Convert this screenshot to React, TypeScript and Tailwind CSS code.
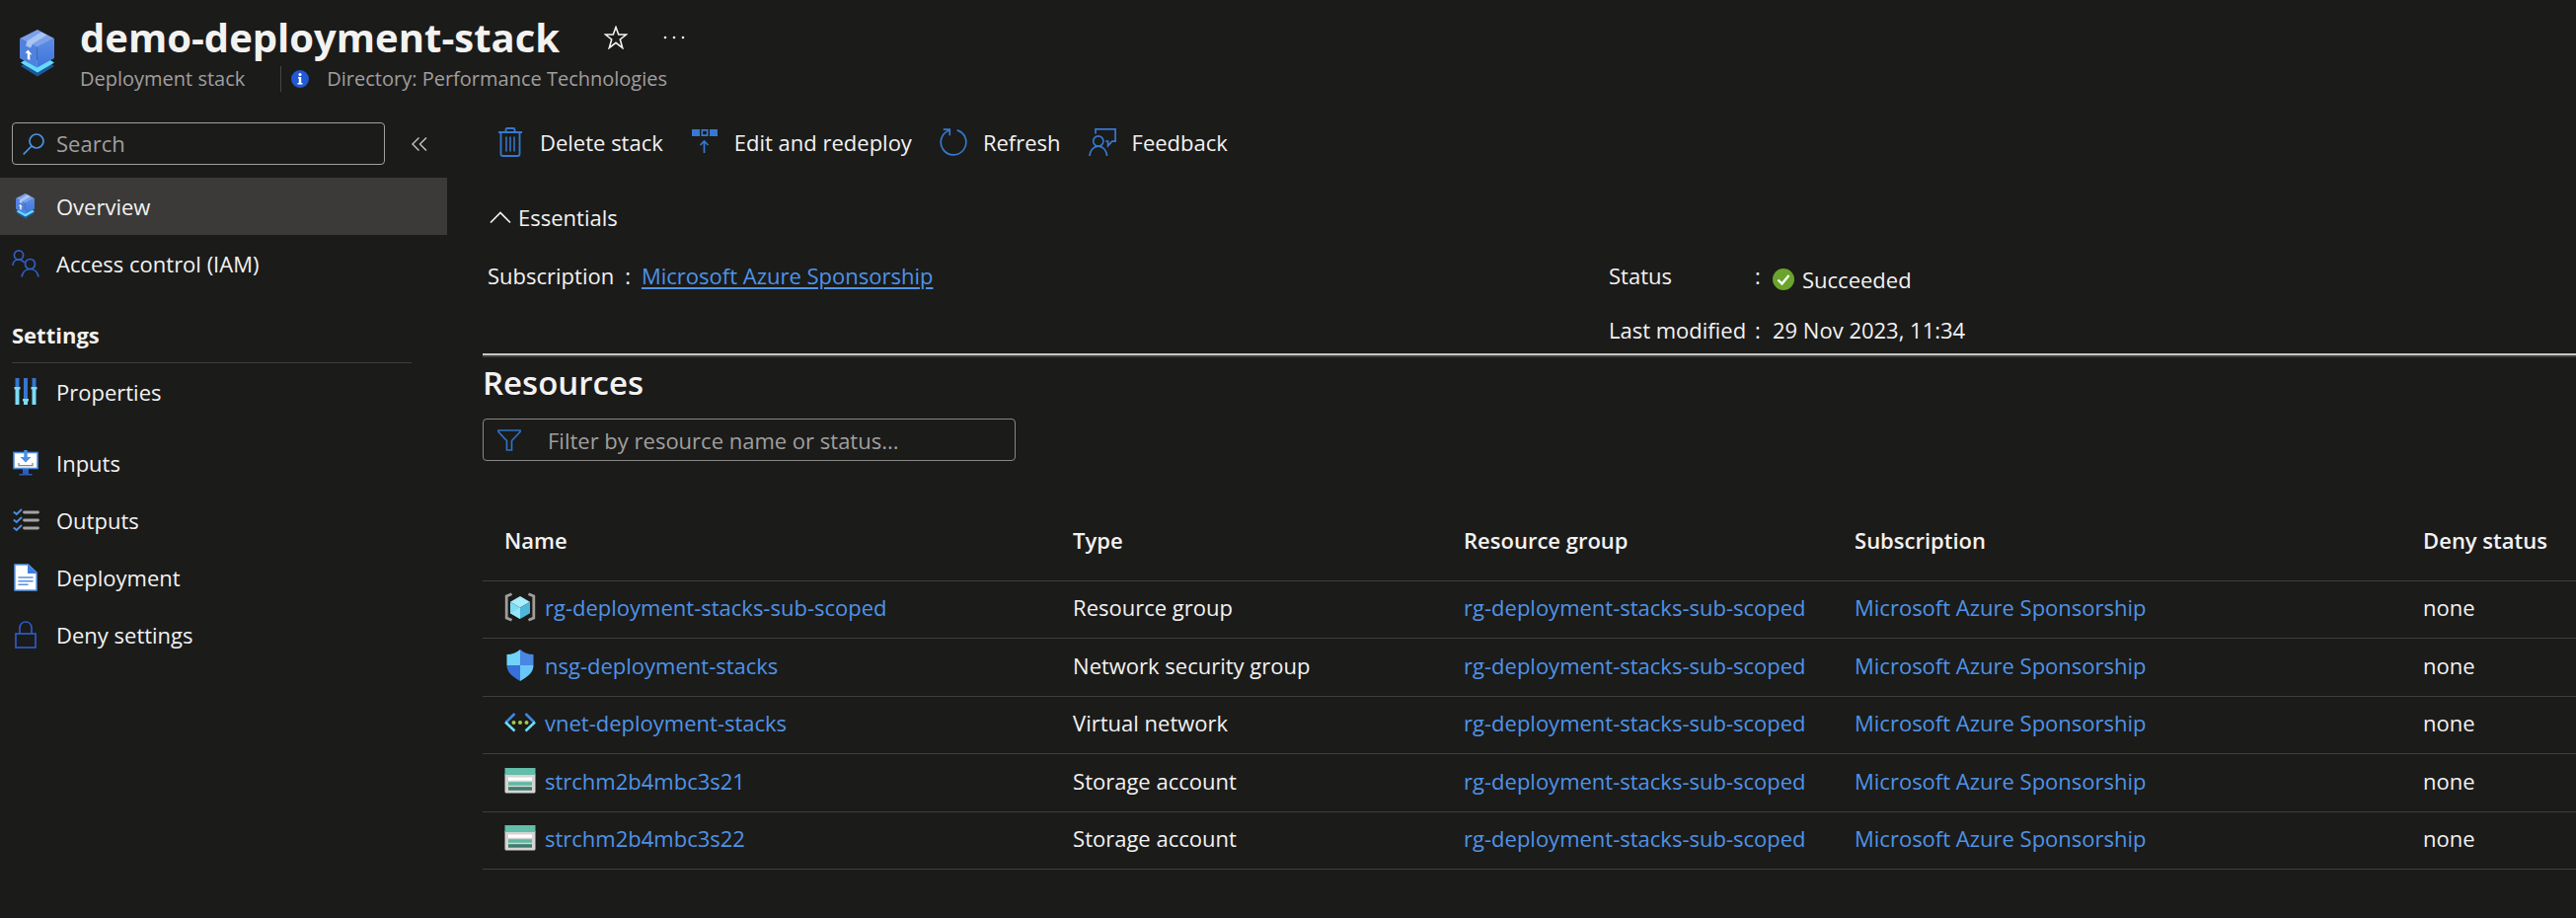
import type { ReactNode } from "react";

type IconProps = { className?: string };

function StackIcon({ className }: IconProps) {
  return (
    <svg viewBox="0 0 36 48" className={className} aria-hidden="true">
      <defs>
        <linearGradient id="stackFront" x1="0" y1="0" x2="0" y2="1">
          <stop offset="0" stopColor="#5c8ee8" />
          <stop offset="1" stopColor="#3e74d8" />
        </linearGradient>
      </defs>
      <path d="M1 37 18 47.500 35 37 31 34.500H5z" fill="#1d5798" />
      <path d="M1 33.500 18 43.500 35 33.500 31 31H5z" fill="#63dcfb" />
      <path d="M0 9 17.500 17V38.500L0 29z" fill="#4f82de" />
      <path d="M35 9 17.500 17V38.500L35 29z" fill="url(#stackFront)" />
      <path d="M18 0 35 9 17.500 17.500 0 9z" fill="#7ba1ea" />
      <path d="M21.500 2.500 27.500 5.500 13 14.500 11 18.500 6 16.500 7.500 11.500z" fill="#a9c4f5" />
      <path d="M8.500 20.500 12.500 25.500 10.300 25V31L7.800 29.700V24L5.500 23.500z" fill="#fff" />
    </svg>
  );
}

function InfoIcon({ className }: IconProps) {
  return (
    <svg viewBox="0 0 18 18" className={className} aria-hidden="true">
      <circle cx="9" cy="9" r="9" fill="#2359d3" />
      <circle cx="9" cy="4.600" r="1.500" fill="#fff" />
      <path d="M7 7h3.200v6H11.500v1.500h-5V13h1.300V8.500H7z" fill="#fff" />
    </svg>
  );
}

function StarIcon({ className }: IconProps) {
  return (
    <svg viewBox="0 0 24 24" className={className} fill="none" stroke="#f3f2f1" strokeWidth="1.600" aria-hidden="true">
      <path d="M12 1.500 14.700 9H22.500L16.300 14 18.700 22.500 12 17.300 5.300 22.500 7.700 14 1.500 9H9.300z" />
    </svg>
  );
}

function MoreIcon({ className }: IconProps) {
  return (
    <svg viewBox="0 0 22 4" className={className} fill="#f3f2f1" aria-hidden="true">
      <circle cx="2" cy="2" r="1.300" />
      <circle cx="11" cy="2" r="1.300" />
      <circle cx="20" cy="2" r="1.300" />
    </svg>
  );
}

function SearchIcon({ className }: IconProps) {
  return (
    <svg viewBox="0 0 22 22" className={className} fill="none" stroke="#4a93dd" strokeWidth="1.700" aria-hidden="true">
      <circle cx="14" cy="8" r="7" />
      <path d="M9 13 .700 21.300" />
    </svg>
  );
}

function CollapseIcon({ className }: IconProps) {
  return (
    <svg viewBox="0 0 16 14" className={className} fill="none" stroke="#c8c6c4" strokeWidth="1.400" aria-hidden="true">
      <path d="M7.500.500 1 7l6.500 6.500M15 .500 8.500 7 15 13.500" />
    </svg>
  );
}

function PeopleIcon({ className }: IconProps) {
  return (
    <svg viewBox="0 0 28 28" className={className} fill="none" stroke="#2f5fc4" strokeWidth="1.700" aria-hidden="true">
      <circle cx="7" cy="5.500" r="4.600" />
      <circle cx="18.500" cy="14.500" r="5" />
      <path d="M1 16c0-3.500 2.500-6 6-6 2.500 0 4.500 1.200 5.600 3.200M10 27.500c.8-4.500 4-8 8.500-8s7.700 3.500 8.500 8" />
    </svg>
  );
}

function SlidersIcon({ className }: IconProps) {
  return (
    <svg viewBox="0 0 24 28" className={className} aria-hidden="true">
      <path d="M1.500 0h4v10h-4zM10 0h4v22h-4zM18.500 0h4v10h-4z" fill="#3576cf" />
      <path d="M.500 9h6v2.500h-1V27h-4V11.500h-1zM17.500 9h6v2.500h-1V27h-4V11.500h-1zM9 21h6v2.500h-1V27h-4v-3.500H9z" fill="#7ddcf5" />
    </svg>
  );
}

function InputsIcon({ className }: IconProps) {
  return (
    <svg viewBox="0 0 26 26" className={className} aria-hidden="true">
      <path d="M10 19h6v5h3.500v1.500h-13V24H10z" fill="#2c5fb5" />
      <rect x="1" y="2.500" width="24" height="16" fill="#fff" stroke="#4b8fe0" strokeWidth="1.600" />
      <path d="M6 13v2.700h14V13" fill="none" stroke="#8a8886" strokeWidth="1.300" />
      <path d="M11.300 0h3.400v7h3.800L13 12.500 7.500 7h3.800z" fill="#4b8fe0" />
    </svg>
  );
}

function OutputsIcon({ className }: IconProps) {
  return (
    <svg viewBox="0 0 27 24" className={className} fill="none" aria-hidden="true">
      <path d="M.800 3.500 3.800 6 9 1M.800 11.500l3 2.500L9 9M.800 19.500l3 2.500L9 17" stroke="#4b8fe0" strokeWidth="2" />
      <path d="M11.500 4H25.500M11.500 12H25.500M11.500 20H25.500" stroke="#a5a3a1" strokeWidth="2.800" strokeLinecap="round" />
    </svg>
  );
}

function DocumentIcon({ className }: IconProps) {
  return (
    <svg viewBox="0 0 24 28" className={className} aria-hidden="true">
      <path d="M1 1h13.500L23 9v18H1z" fill="#fff" stroke="#5b97e8" strokeWidth="1.500" />
      <path d="M14 .500 23.500 10H14z" fill="#3f7fdc" />
      <path d="M5 14h14M5 17.700h14M5 21.300h9" stroke="#5b8fe0" strokeWidth="1.600" strokeLinecap="round" />
    </svg>
  );
}

function LockIcon({ className }: IconProps) {
  return (
    <svg viewBox="0 0 22 28" className={className} fill="none" stroke="#3059c4" strokeWidth="1.700" aria-hidden="true">
      <rect x="1" y="13" width="20" height="14" />
      <path d="M5 13V7.500C5 3.500 7.500 1 11 1s6 2.500 6 6.500V13" />
    </svg>
  );
}

function TrashIcon({ className }: IconProps) {
  return (
    <svg viewBox="0 0 24 30" className={className} fill="none" stroke="#3679cf" strokeWidth="1.800" aria-hidden="true">
      <path d="M0 5h24M7.500 5V2.500Q7.500 1 9 1h6q1.500 0 1.500 1.500V5M2.500 5v22q0 2 2 2h15q2 0 2-2V5" />
      <path d="M8 9.500v15M12 9.500v15M16 9.500v15" strokeWidth="1.500" />
    </svg>
  );
}

function RedeployIcon({ className }: IconProps) {
  return (
    <svg viewBox="0 0 26 30" className={className} fill="none" stroke="#3679cf" strokeWidth="1.700" aria-hidden="true">
      <path d="M0 2h8v7H0zM18 2h8v7h-8z" fill="#3679cf" stroke="none" />
      <path d="M10.300 2.900h5.400v5.200h-5.400zM12.500 26V14M8.500 18l4-4 4 4" />
    </svg>
  );
}

function RefreshIcon({ className }: IconProps) {
  return (
    <svg viewBox="0 0 30 30" className={className} fill="none" stroke="#3679cf" strokeWidth="1.800" aria-hidden="true">
      <path d="M19 2A13.700 13.700 0 1 1 10.500 2.200M4 1.200h7v6.500" />
    </svg>
  );
}

function FeedbackIcon({ className }: IconProps) {
  return (
    <svg viewBox="0 0 30 30" className={className} fill="none" stroke="#3679cf" strokeWidth="1.800" aria-hidden="true">
      <path d="M7.500 6V1H29v13h-3.500l-4.500 5v-5h-2.500" />
      <circle cx="10.500" cy="14" r="5.500" />
      <path d="M1 30c.5-6 4.300-10.500 9.500-10.500S19.500 24 20 30" />
    </svg>
  );
}

function ChevronUpIcon({ className }: IconProps) {
  return (
    <svg viewBox="0 0 22 12" className={className} fill="none" stroke="#f3f2f1" strokeWidth="1.600" aria-hidden="true">
      <path d="M1 11.500 11 1.500l10 10" />
    </svg>
  );
}

function SuccessIcon({ className }: IconProps) {
  return (
    <svg viewBox="0 0 22 22" className={className} fill="none" aria-hidden="true">
      <circle cx="11" cy="11" r="11" fill="#6aa42c" />
      <path d="m5.500 11.500 4 4 7-8.500" stroke="#fff" strokeWidth="2.400" />
    </svg>
  );
}

function FunnelIcon({ className }: IconProps) {
  return (
    <svg viewBox="0 0 24 22" className={className} fill="none" stroke="#2f72c4" strokeWidth="1.700" aria-hidden="true">
      <path d="M1 1h22v1.500L14.500 11.500V21h-5v-9.500L1 2.500z" />
    </svg>
  );
}

function ResourceGroupIcon({ className }: IconProps) {
  return (
    <svg viewBox="0 0 32 30" className={className} aria-hidden="true">
      <path d="M7.500 1.700 2.200 4v22l5.300 2.300M24.500 1.700 29.800 4v22l-5.300 2.300" fill="none" stroke="#a09e9c" strokeWidth="2.800" />
      <path d="m16 4 10 5.700-10 5.800L6 9.700z" fill="#a9ecfb" />
      <path d="M6 9.700 16 15.500V27L6 21.300z" fill="#7bdcf3" />
      <path d="M26 9.700 16 15.500V27l10-5.700z" fill="#4fb8d8" />
      <path d="m6 21.300 10-5.800V27z" fill="#97e6f8" />
    </svg>
  );
}

function ShieldIcon({ className }: IconProps) {
  return (
    <svg viewBox="0 0 32 32" className={className} aria-hidden="true">
      <path d="M16 0v16H2.500V5C8 5 12 3.500 16 0z" fill="#6fd3f8" />
      <path d="M16 0v16h13.500V5C24 5 20 3.500 16 0z" fill="#4a86e4" />
      <path d="M2.500 16H16v16C8 27.500 2.500 23 2.500 16z" fill="#3670d8" />
      <path d="M29.500 16H16v16c8-4.500 13.500-9 13.500-16z" fill="#69c6f8" />
    </svg>
  );
}

function NetworkIcon({ className }: IconProps) {
  return (
    <svg viewBox="0 0 32 20" className={className} fill="none" aria-hidden="true">
      <path d="M10.500 1 1.500 10M21.500 1l9 9" stroke="#3f86dc" strokeWidth="2.600" />
      <path d="m1 9.500 9.500 9M31 9.500l-9.500 9" stroke="#6cdcf2" strokeWidth="2.600" />
      <g fill="#a4c948">
        <circle cx="9.500" cy="10" r="2" />
        <circle cx="16" cy="10" r="2" />
        <circle cx="22.500" cy="10" r="2" />
      </g>
    </svg>
  );
}

function StorageIcon({ className }: IconProps) {
  return (
    <svg viewBox="0 0 32 26" className={className} aria-hidden="true">
      <path d="M.500 6h31v18q0 1.500-1.500 1.500H2Q.500 25.500.500 24z" fill="#d6d4d2" />
      <path d="M.500 0h31v7H.500z" fill="#62bda9" />
      <path d="M4 9.500h24v3.200H4z" fill="#fff" />
      <path d="M4 14.200h24v3.500H4z" fill="#5cb8a4" />
      <path d="M4 19.200h24v3.500H4z" fill="#3d7c6d" />
    </svg>
  );
}

function NavItem({ icon, label, active = false }: { icon: ReactNode; label: string; active?: boolean }) {
  return (
    <li>
      <a
        href="#"
        aria-current={active ? "page" : undefined}
        className={active ? "flex h-[58px] items-center gap-[17px] bg-[#3b3a38] pl-3" : "flex h-[58px] items-center gap-[17px] pl-3"}
      >
        <span className="flex w-7 justify-center">{icon}</span>
        {label}
      </a>
    </li>
  );
}

function Command({ icon, label }: { icon: ReactNode; label: string }) {
  return (
    <button type="button" className="flex items-center gap-4">
      <span className="flex w-7 justify-center">{icon}</span>
      {label}
    </button>
  );
}

const resources = [
  { icon: <ResourceGroupIcon className="w-8" />, name: "rg-deployment-stacks-sub-scoped", type: "Resource group" },
  { icon: <ShieldIcon className="w-8" />, name: "nsg-deployment-stacks", type: "Network security group" },
  { icon: <NetworkIcon className="w-8" />, name: "vnet-deployment-stacks", type: "Virtual network" },
  { icon: <StorageIcon className="w-8" />, name: "strchm2b4mbc3s21", type: "Storage account" },
  { icon: <StorageIcon className="w-8" />, name: "strchm2b4mbc3s22", type: "Storage account" },
];

export default function App() {
  return (
    <div className="min-h-screen bg-[#1b1b1a] font-['Open_Sans','Noto_Sans',sans-serif] text-[22px] leading-8 text-[#f3f2f1]">
      <header className="flex h-[124px] items-start pt-3">
        <StackIcon className="ml-5 mt-[18px] h-12 w-9 shrink-0" />
        <div className="ml-[25px]">
          <div className="flex h-[52px] items-center">
            <h1 className="text-[40px] font-bold leading-[52px]">demo-deployment-stack</h1>
            <button type="button" aria-label="Add to favorites" className="ml-[45px]">
              <StarIcon className="size-6" />
            </button>
            <button type="button" aria-label="More actions" className="ml-9">
              <MoreIcon className="w-[22px]" />
            </button>
          </div>
          <div className="flex h-8 items-center text-[20px] text-[#a19f9d]">
            <span>Deployment stack</span>
            <span className="ml-9 h-[26px] w-px bg-[#484644]" />
            <InfoIcon className="ml-[10px] size-[18px]" />
            <span className="ml-[18px]">Directory: Performance Technologies</span>
          </div>
        </div>
      </header>

      <div className="flex">
        <aside className="w-[453px] shrink-0">
          <div className="flex items-center pl-3">
            <label className="flex h-[43px] w-[378px] items-center gap-3 rounded-sm border border-[#a19f9d] pl-[10px]">
              <SearchIcon className="size-[22px] shrink-0" />
              <input
                type="text"
                aria-label="Search"
                placeholder="Search"
                className="h-10 min-w-0 flex-1 bg-transparent pb-[2px] outline-none placeholder:text-[#a19f9d]"
              />
            </label>
            <button type="button" aria-label="Collapse menu" className="ml-[27px]">
              <CollapseIcon className="w-4" />
            </button>
          </div>
          <nav className="mt-[13px] font-medium">
            <ul>
              <NavItem active icon={<StackIcon className="h-[26px]" />} label="Overview" />
              <NavItem icon={<PeopleIcon className="w-7" />} label="Access control (IAM)" />
            </ul>
            <h2 className="ml-3 mr-9 mt-[27px] border-b border-[#3f3e3d] pb-3 font-bold">Settings</h2>
            <ul>
              <NavItem icon={<SlidersIcon className="w-6" />} label="Properties" />
            </ul>
            <ul className="mt-[14px]">
              <NavItem icon={<InputsIcon className="w-[26px]" />} label="Inputs" />
              <NavItem icon={<OutputsIcon className="w-[27px]" />} label="Outputs" />
              <NavItem icon={<DocumentIcon className="w-6" />} label="Deployment" />
              <NavItem icon={<LockIcon className="w-[22px]" />} label="Deny settings" />
            </ul>
          </nav>
        </aside>

        <main className="min-w-0 flex-1 pl-9">
          <div className="flex h-10 items-center gap-7 pl-[14px]">
            <Command icon={<TrashIcon className="w-6" />} label="Delete stack" />
            <Command icon={<RedeployIcon className="w-[26px]" />} label="Edit and redeploy" />
            <Command icon={<RefreshIcon className="w-[30px]" />} label="Refresh" />
            <Command icon={<FeedbackIcon className="w-[30px]" />} label="Feedback" />
          </div>

          <section className="pl-[5px] pt-10">
            <button type="button" className="flex items-center gap-[7px] pl-[2px]">
              <ChevronUpIcon className="w-[22px]" />
              Essentials
            </button>
            <dl className="mt-[27px] grid grid-cols-[1136fr_980fr]">
              <div className="flex">
                <dt>Subscription</dt>
                <dd className="flex">
                  <span className="mx-[11px]">:</span>
                  <a href="#" className="text-[#4f93e6] underline underline-offset-3">Microsoft Azure Sponsorship</a>
                </dd>
              </div>
              <div className="grid grid-cols-[148px_18px_1fr] gap-y-[19px]">
                <dt>Status</dt>
                <span>:</span>
                <dd className="flex items-center gap-2 pt-1">
                  <SuccessIcon className="w-[22px]" />
                  Succeeded
                </dd>
                <dt>Last modified</dt>
                <span>:</span>
                <dd>29 Nov 2023, 11:34</dd>
              </div>
            </dl>
          </section>

          <div className="mt-2 border-b-2 border-t-2 border-b-[#3f3e3d] border-t-[#c8c6c4]" />

          <section>
            <h2 className="mt-1 text-[33px] font-semibold leading-[44px]">Resources</h2>
            <label className="mt-[14px] flex h-[43px] w-[540px] items-center gap-[27px] rounded-sm border border-[#8a8886] pl-[14px]">
              <FunnelIcon className="w-6 shrink-0" />
              <input
                type="text"
                aria-label="Filter resources"
                placeholder="Filter by resource name or status..."
                className="h-10 min-w-0 flex-1 bg-transparent outline-none placeholder:text-[#a19f9d]"
              />
            </label>

            <table className="mt-10 w-full table-fixed border-collapse text-left">
              <colgroup>
                <col className="w-[27.160%]" />
                <col className="w-[18.670%]" />
                <col className="w-[18.670%]" />
                <col className="w-[27.160%]" />
                <col />
              </colgroup>
              <thead>
                <tr className="h-[81px] border-b border-[#3f3e3d]">
                  <th className="pl-[22px] font-semibold">Name</th>
                  <th className="pl-[22px] font-semibold">Type</th>
                  <th className="pl-[22px] font-semibold">Resource group</th>
                  <th className="pl-[22px] font-semibold">Subscription</th>
                  <th className="pl-[22px] font-semibold">Deny status</th>
                </tr>
              </thead>
              <tbody>
                {resources.map((r) => (
                  <tr key={r.name} className="border-b border-[#3f3e3d] odd:h-[58px] even:h-[59px]">
                    <td className="pb-1 pl-[22px]">
                      <a href="#" className="flex items-center gap-[9px] text-[#4f93e6]">
                        {r.icon}
                        {r.name}
                      </a>
                    </td>
                    <td className="pb-1 pl-[22px]">{r.type}</td>
                    <td className="pb-1 pl-[22px]">
                      <a href="#" className="text-[#4f93e6]">rg-deployment-stacks-sub-scoped</a>
                    </td>
                    <td className="pb-1 pl-[22px]">
                      <a href="#" className="text-[#4f93e6]">Microsoft Azure Sponsorship</a>
                    </td>
                    <td className="pb-1 pl-[22px]">none</td>
                  </tr>
                ))}
              </tbody>
            </table>
          </section>
        </main>
      </div>
    </div>
  );
}
